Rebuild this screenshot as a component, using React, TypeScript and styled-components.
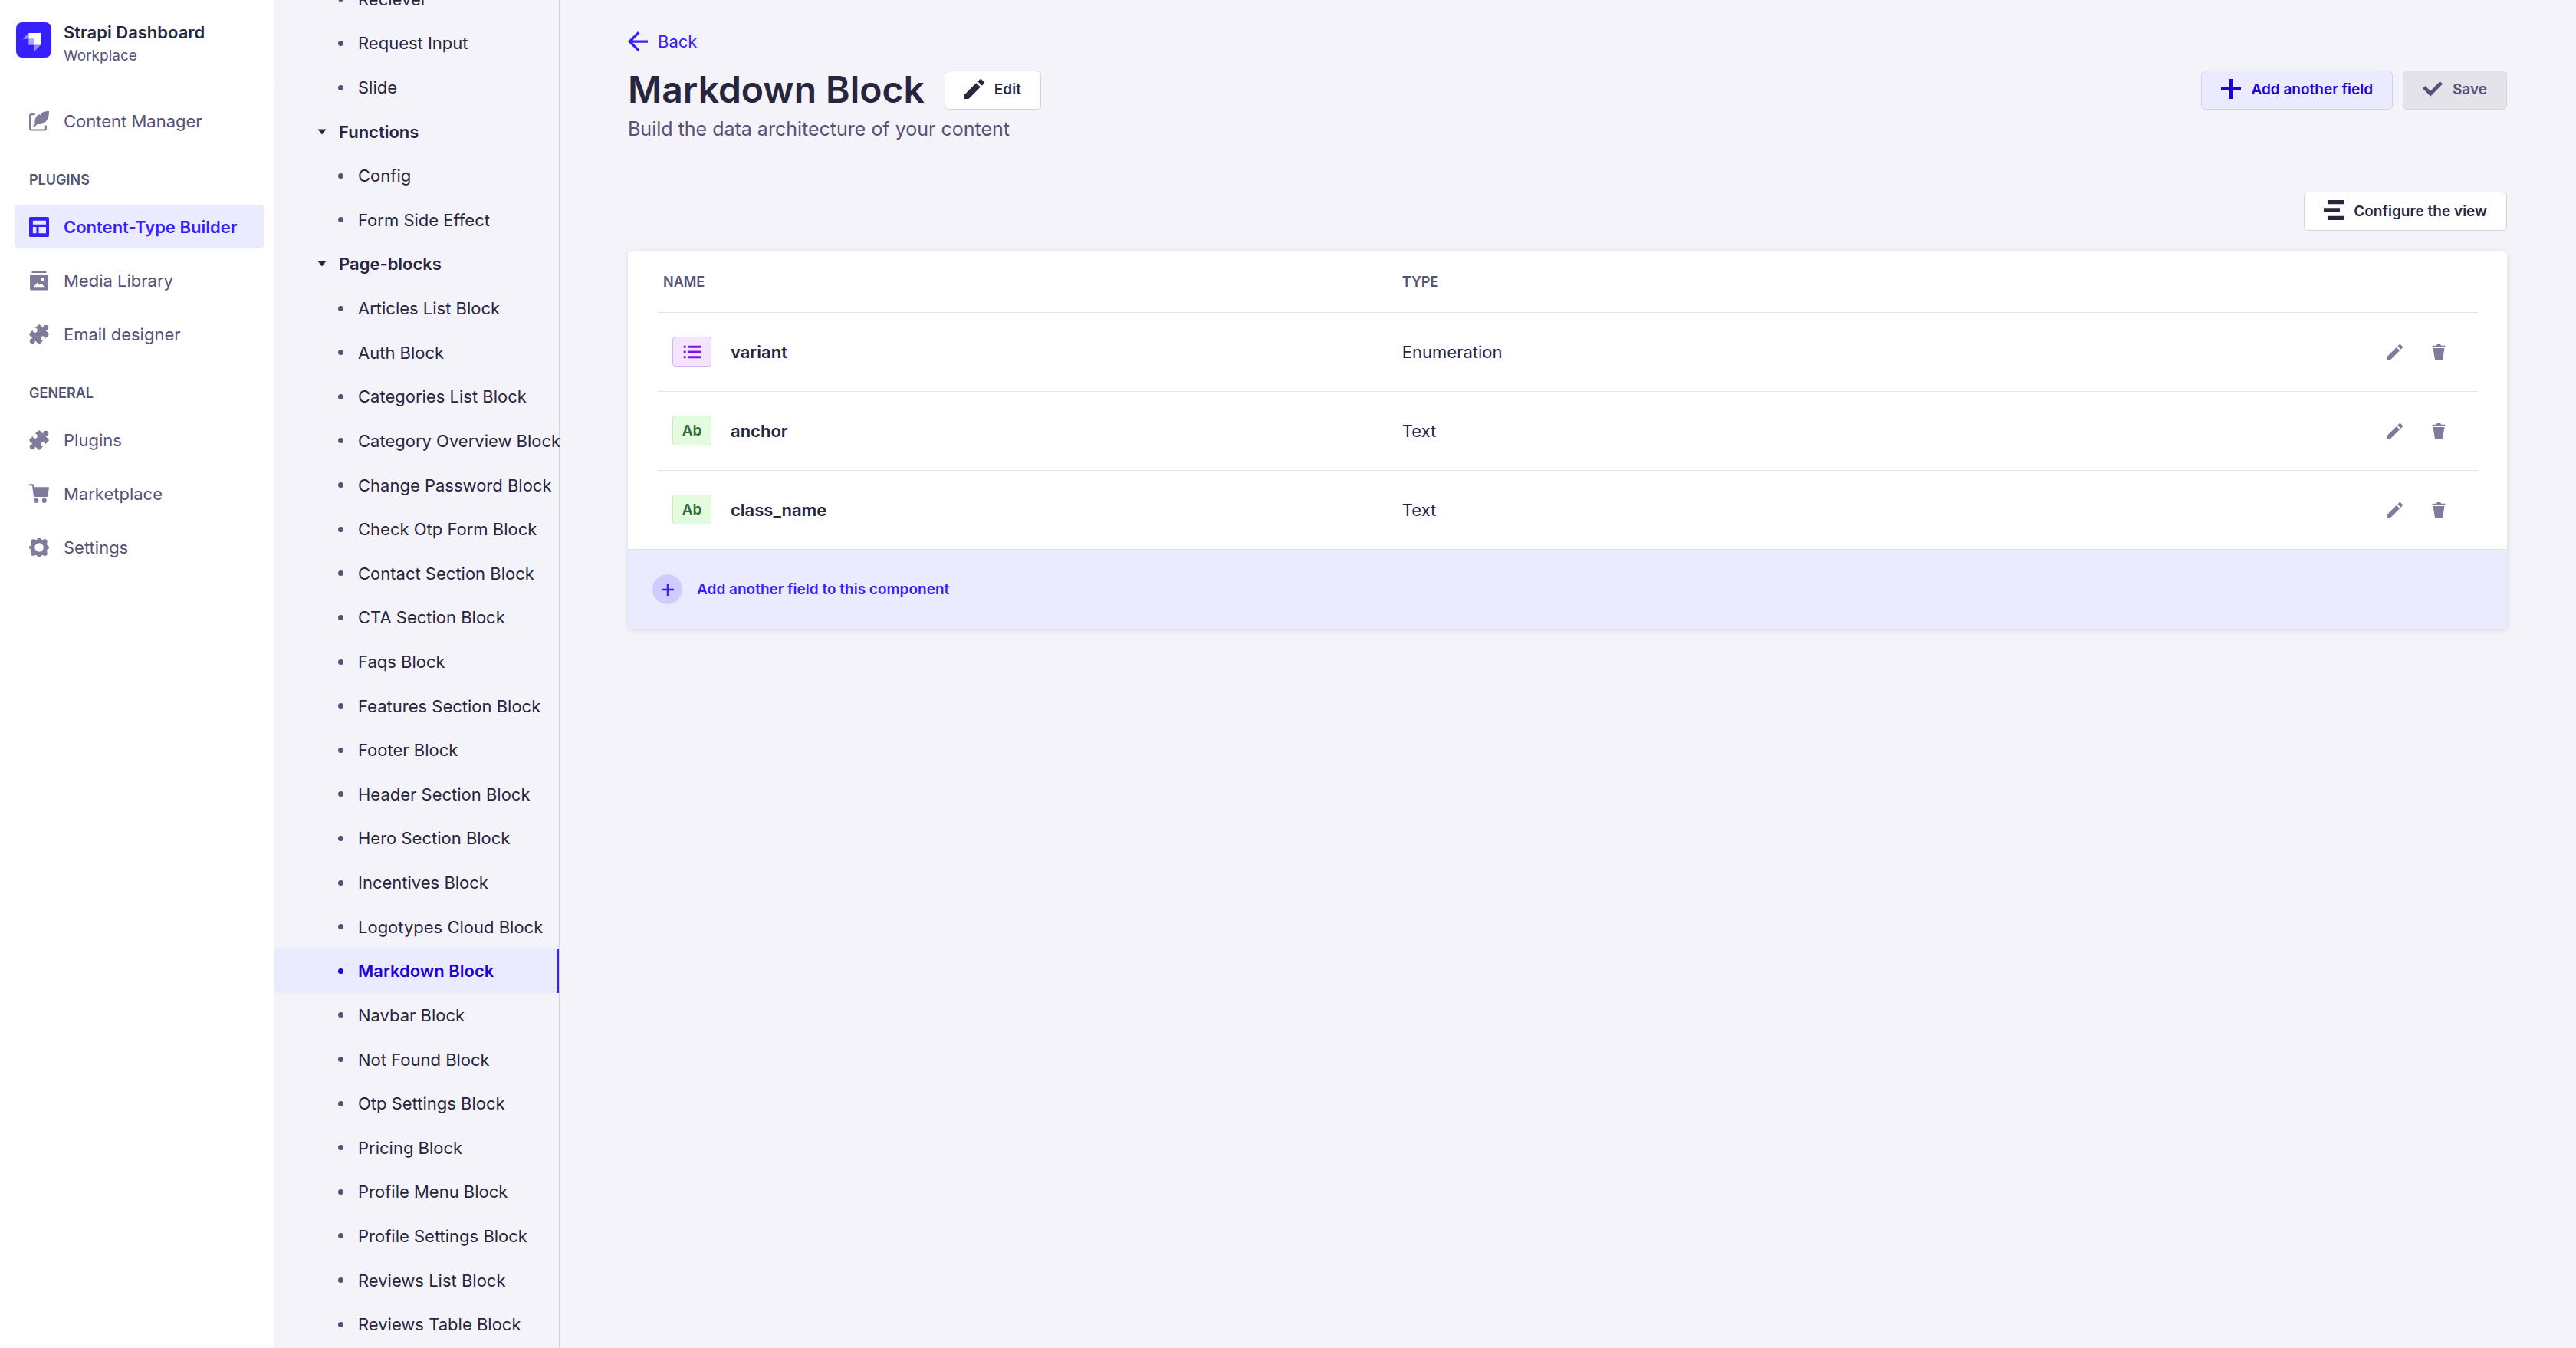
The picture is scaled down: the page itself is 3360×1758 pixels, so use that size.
import React from "react";
import styled, { createGlobalStyle, css } from "styled-components";

const color = {
  primary: "#3720ff",
  primaryDark: "#1f00dc",
  primarySoft: "#eaebff",
  primaryLine: "#d0ccff",
  text: "#28253e",
  textSoft: "#555276",
  icon: "#7e7b9b",
  canvas: "#f4f3f9",
  line: "#e3e3ea",
  lineStrong: "#d3d3df",
};

const GlobalStyle = createGlobalStyle`
  *, *::before, *::after { box-sizing: border-box; }
  body {
    margin: 0;
    background: ${color.canvas};
    color: ${color.text};
    font-family: Inter, "Liberation Sans", sans-serif;
    font-size: 22px;
    line-height: 32px;
  }
  ul { margin: 0; padding: 0; list-style: none; }
  a { color: inherit; text-decoration: none; }
  button { font: inherit; cursor: pointer; }
`;

/* ---------- Icons ---------- */

const Svg = styled.svg<{ $size: number }>`
  display: block;
  flex: none;
  width: ${(p) => p.$size}px;
  height: ${(p) => p.$size}px;
  fill: currentColor;
`;

type IconProps = { size?: number };

const ArrowLeftIcon = ({ size = 26 }: IconProps) => (
  <Svg $size={size} viewBox="0 0 24 24" aria-hidden="true">
    <path d="M24 13.3a.2.2 0 01-.2.2H5.74l8.239 8.239a.2.2 0 010 .282L12.14 23.86a.2.2 0 01-.282 0L.14 12.14a.2.2 0 010-.282L11.86.14a.2.2 0 01.282 0L13.98 1.98a.2.2 0 010 .282L5.74 10.5H23.8c.11 0 .2.09.2.2v2.6z" />
  </Svg>
);

const PencilIcon = ({ size = 26 }: IconProps) => (
  <Svg $size={size} viewBox="0 0 24 24" aria-hidden="true">
    <path d="M23.604 3.514c.528.528.528 1.36 0 1.887l-2.622 2.607-4.99-4.99L18.6.396a1.322 1.322 0 011.887 0l3.118 3.118zM0 24v-4.99l14.2-14.2 4.99 4.99L4.99 24H0z" />
  </Svg>
);

const TrashIcon = ({ size = 20 }: IconProps) => (
  <Svg $size={size} viewBox="0 0 24 24" aria-hidden="true">
    <path d="M3.236 6.149a.2.2 0 00-.197.233L6 24h12l2.96-17.618a.2.2 0 00-.196-.233H3.236zM21.8 1.983c.11 0 .2.09.2.2v1.584a.2.2 0 01-.2.2H2.2a.2.2 0 01-.2-.2V2.183c0-.11.09-.2.2-.2h5.511c.9 0 1.631-1.09 1.631-1.983h5.316c0 .894.73 1.983 1.631 1.983H21.8z" />
  </Svg>
);

const PlusIcon = ({ size = 26 }: IconProps) => (
  <Svg $size={size} viewBox="0 0 24 24" aria-hidden="true">
    <path d="M24 13.604a.3.3 0 01-.3.3h-9.795V23.7a.3.3 0 01-.3.3h-3.21a.3.3 0 01-.3-.3v-9.795H.3a.3.3 0 01-.3-.3v-3.21a.3.3 0 01.3-.3h9.795V.3a.3.3 0 01.3-.3h3.21a.3.3 0 01.3.3v9.795H23.7a.3.3 0 01.3.3v3.21z" />
  </Svg>
);

const CheckIcon = ({ size = 26 }: IconProps) => (
  <Svg $size={size} viewBox="0 0 24 24" aria-hidden="true">
    <path d="M20.727 2.97a.2.2 0 01.286 0l2.85 2.89a.2.2 0 010 .28L9.554 20.854a.2.2 0 01-.285 0l-9.13-9.243a.2.2 0 010-.281l2.85-2.892a.2.2 0 01.284 0l6.14 6.209L20.726 2.97z" />
  </Svg>
);

const LayerIcon = ({ size = 26 }: IconProps) => (
  <Svg $size={size} viewBox="0 0 24 24" aria-hidden="true">
    <path d="M4.6 0H24v4.8H4.6zM0 9.4h19.4v4.8H0zM4.6 19.2H24V24H4.6z" />
  </Svg>
);

const FeatherIcon = ({ size = 26 }: IconProps) => (
  <Svg $size={size} viewBox="0 0 24 24" aria-hidden="true">
    <path
      d="M7 3.8H2.4a1.4 1.4 0 00-1.4 1.4v16a1.4 1.4 0 001.4 1.4h16.4a1.4 1.4 0 001.4-1.4V17"
      fill="none"
      stroke="currentColor"
      strokeWidth="1.9"
    />
    <path d="M24 0c.3 4.600-1 9.600-4.300 12.900-2.300 2.300-5.400 2.900-8.700 2.900-1.400 0-2.300.8-3.100 1.700l-2.100 1.700c-.7.500-1.600-.3-1.100-1l2.300-2.700c-.5-3.400 0-7.200 2.300-9.800.9-1 2-1.700 3-1.700.4 0 .7.5 1 .9C14.500 1.500 18.600 0 24 0z" />
  </Svg>
);

const LayoutIcon = ({ size = 26 }: IconProps) => (
  <Svg $size={size} viewBox="0 0 24 24" aria-hidden="true">
    <path
      fillRule="evenodd"
      d="M1.500 0h21A1.500 1.500 0 0124 1.500v21a1.500 1.500 0 01-1.500 1.500h-21A1.500 1.500 0 010 22.500v-21A1.500 1.500 0 011.500 0zM4.500 4.300V9h15.800V4.300zM4.500 12v7.500h4.200V12zM11.600 12v7.500h8.700V12z"
    />
  </Svg>
);

const ImageIcon = ({ size = 26 }: IconProps) => (
  <Svg $size={size} viewBox="0 0 24 24" aria-hidden="true">
    <rect x="3.200" y="1" width="17.600" height="1.700" rx=".5" />
    <path
      fillRule="evenodd"
      d="M2.200 4.900h19.600a1.200 1.200 0 011.200 1.200v16.200a1.200 1.200 0 01-1.200 1.200H2.200A1.200 1.200 0 011 22.300V6.100a1.200 1.200 0 011.200-1.200zM16.400 8.500a2.200 2.200 0 100 4.400 2.200 2.200 0 000-4.400zM5.200 19.500h13.900l-4.400-4-2.200 1.700-2.300-3z"
    />
  </Svg>
);

const PuzzleIcon = ({ size = 26 }: IconProps) => (
  <Svg $size={size} viewBox="0 0 24 24" aria-hidden="true">
    <path
      transform="translate(12 12) rotate(45)"
      d="M-7-8.800H-2A3.300 3.300 0 112-8.800H7a1.800 1.800 0 011.800 1.800V-2A2.800 2.800 0 108.800 2V7a1.800 1.800 0 01-1.800 1.800H2A3.300 3.300 0 11-2 8.800H-7a1.800 1.800 0 01-1.800-1.800V2A2.800 2.800 0 10-8.800-2V-7a1.800 1.800 0 011.800-1.800z"
    />
  </Svg>
);

const CartIcon = ({ size = 26 }: IconProps) => (
  <Svg $size={size} viewBox="0 0 24 24" aria-hidden="true">
    <path d="M.6.300h3.700c.6 0 1 .3 1.100.9l.5 2.700h17.200c.6 0 1 .5.900 1l-1.700 9.600c-.1.700-.7 1.100-1.300 1.100H7.100c-.9 0-1.600-.6-1.700-1.400L3.700 2.100H.6C.2 2.100 0 1.800 0 1.500V.9C0 .5.300.300.6.300z" />
    <circle cx="8.600" cy="20.200" r="2.800" />
    <circle cx="18.200" cy="20.200" r="2.800" />
  </Svg>
);

const CogIcon = ({ size = 26 }: IconProps) => (
  <Svg $size={size} viewBox="-12 -12 24 24" aria-hidden="true">
    <path
      fillRule="evenodd"
      d="M0-12c1 0 1.700.6 2.100 1.500.4.900 1.200 1.400 2.100 1.100l3.300-.5c1.300-.1 2.500 1 2.400 2.400l-.5 3.300c-.3.900.2 1.700 1.100 2.100.9.400 1.500 1.100 1.500 2.100s-.6 1.700-1.500 2.100c-.9.400-1.400 1.200-1.100 2.100l.5 3.300c.1 1.300-1.100 2.500-2.400 2.400l-3.300-.5c-.9-.3-1.700.2-2.100 1.100C1.700 11.400 1 12 0 12s-1.700-.6-2.100-1.500c-.4-.9-1.200-1.400-2.100-1.100l-3.300.5c-1.300.1-2.500-1.100-2.400-2.400l.5-3.300c.3-.9-.2-1.700-1.100-2.100C-11.400 1.700-12 1-12 0s.6-1.700 1.500-2.100c.9-.4 1.400-1.200 1.100-2.100l-.5-3.300c-.1-1.400 1.100-2.500 2.400-2.400l3.300.5c.9.300 1.700-.2 2.100-1.100C-1.700-11.400-1-12 0-12zM0-5.300a5.300 5.300 0 100 10.600 5.300 5.300 0 000-10.600z"
    />
  </Svg>
);

const ListIcon = ({ size = 24 }: IconProps) => (
  <Svg $size={size} viewBox="0 0 24 24" aria-hidden="true">
    <circle cx="2.200" cy="5.200" r="1.700" />
    <circle cx="2.200" cy="12" r="1.700" />
    <circle cx="2.200" cy="18.800" r="1.700" />
    <rect x="6.200" y="3.700" width="17" height="3" rx="1" />
    <rect x="6.200" y="10.500" width="17" height="3" rx="1" />
    <rect x="6.200" y="17.300" width="17" height="3" rx="1" />
  </Svg>
);

const CaretIcon = ({ size = 12 }: IconProps) => (
  <Svg $size={size} viewBox="0 0 12 12" aria-hidden="true">
    <path d="M.5 2.500h11L6 9.500z" />
  </Svg>
);

const StrapiLogo = ({ size = 46 }: IconProps) => (
  <Svg $size={size} viewBox="0 0 138 138" aria-hidden="true">
    <rect width="138" height="138" rx="24" fill={color.primary} />
    <path d="M49 42h47v47H72V65H49z" fill="#fff" />
    <path d="M49 65h23v24H49z" fill="#aca4ff" />
    <path d="M49 42v23H25zM72 89h24L72 113z" fill="#9488ff" />
  </Svg>
);

/* ---------- Shell ---------- */

const Shell = styled.div`
  display: flex;
  height: 100vh;
  overflow: hidden;
`;

const MainNav = styled.nav`
  flex: none;
  width: 358px;
  background: #fff;
  border-right: 1px solid ${color.line};
`;

const Brand = styled.div`
  display: flex;
  align-items: center;
  gap: 16px;
  height: 110px;
  padding: 0 21px 6px;
  border-bottom: 1px solid ${color.line};
`;

const BrandText = styled.div`
  display: flex;
  flex-direction: column;
  padding-top: 12px;
`;

const BrandName = styled.span`
  font-weight: 600;
  line-height: 30px;
`;

const BrandPlace = styled.span`
  color: ${color.textSoft};
  font-size: 19px;
  line-height: 32px;
`;

const NavBody = styled.div`
  padding: 19px 12px 0 19px;
`;

const NavHeading = styled.h2`
  margin: 0;
  padding: 39px 19px 22px;
  color: ${color.textSoft};
  font-size: 18px;
  font-weight: 600;
  line-height: 20px;
  text-transform: uppercase;
`;

const NavList = styled.ul`
  display: flex;
  flex-direction: column;
  gap: 13px;
`;

const NavLink = styled.a<{ $active?: boolean }>`
  display: flex;
  align-items: center;
  gap: 19px;
  height: 57px;
  padding: 0 19px;
  border-radius: 6px;
  color: ${(p) => (p.$active ? color.primary : color.textSoft)};
  background: ${(p) => (p.$active ? color.primarySoft : "transparent")};
  font-weight: ${(p) => (p.$active ? 600 : 400)};
  white-space: nowrap;

  svg {
    color: ${(p) => (p.$active ? color.primary : color.icon)};
  }
`;

/* ---------- Component list ---------- */

const SubNav = styled.nav`
  display: flex;
  flex: none;
  flex-direction: column;
  width: 372px;
  border-right: 1px solid ${color.lineStrong};
`;

/* The list is shown scrolled, with its first row partly above the panel. */
const SubNavScroller = styled.div`
  display: flex;
  flex: 1;
  flex-direction: column;
  margin-top: -30px;
  padding-bottom: 2px;
`;

const Group = styled.section<{ $rows: number }>`
  display: flex;
  flex-direction: column;
  flex: ${(p) => p.$rows} 0 0;
`;

const GroupList = styled.ul<{ $rows: number }>`
  display: grid;
  grid-template-columns: minmax(0, 1fr);
  grid-auto-rows: 1fr;
  flex: ${(p) => p.$rows} 0 0;
`;

const GroupToggle = styled.button`
  display: flex;
  flex: 1 0 0;
  align-items: center;
  gap: 16px;
  padding: 0 0 0 56px;
  border: 0;
  background: none;
  color: ${color.text};
  font-weight: 600;
`;

const SubLink = styled.a<{ $active?: boolean }>`
  display: flex;
  align-items: center;
  gap: 19px;
  height: 100%;
  padding-left: 83px;
  white-space: nowrap;

  &::before {
    content: "";
    flex: none;
    width: 7px;
    height: 7px;
    border-radius: 50%;
    background: ${color.textSoft};
  }

  ${(p) =>
    p.$active &&
    css`
      color: ${color.primaryDark};
      background: ${color.primarySoft};
      border-right: 3px solid ${color.primary};
      font-weight: 600;

      &::before {
        background: ${color.primaryDark};
      }
    `}
`;

/* ---------- Content ---------- */

const Content = styled.main`
  flex: 1;
  min-width: 0;
  padding: 38px 90px 0 89px;
`;

const BackLink = styled.a`
  display: inline-flex;
  align-items: center;
  gap: 13px;
  color: ${color.primary};
`;

const TitleRow = styled.div`
  display: flex;
  align-items: center;
  justify-content: space-between;
  margin-top: 10px;
`;

const Cluster = styled.div<{ $gap: number }>`
  display: flex;
  align-items: center;
  gap: ${(p) => p.$gap}px;
`;

const Title = styled.h1`
  margin: 0;
  font-size: 48px;
  font-weight: 600;
  line-height: 64px;
`;

const Subtitle = styled.p`
  margin: 0;
  color: ${color.textSoft};
  font-size: 25px;
  line-height: 38px;
`;

const buttonTones = {
  plain: css`
    color: ${color.text};
    background: #fff;
    border-color: ${color.lineStrong};
  `,
  primary: css`
    color: ${color.primaryDark};
    background: ${color.primarySoft};
    border-color: ${color.primaryLine};
  `,
  disabled: css`
    color: ${color.textSoft};
    background: #e4e3ea;
    border-color: ${color.lineStrong};
  `,
};

const Button = styled.button<{ $tone: keyof typeof buttonTones }>`
  display: inline-flex;
  align-items: center;
  gap: 13px;
  height: 51px;
  padding: 0 25px;
  border: 1px solid;
  border-radius: 6px;
  font-size: 19px;
  font-weight: 600;
  line-height: 24px;
  white-space: nowrap;
  ${(p) => buttonTones[p.$tone]}

  svg {
    margin-bottom: 3px;
  }
`;

const Toolbar = styled.div`
  display: flex;
  justify-content: flex-end;
  margin: 63px 0 26px;
`;

const Card = styled.section`
  overflow: hidden;
  border-radius: 6px;
  background: #fff;
  box-shadow: 0 2px 7px rgba(33, 33, 52, 0.12);
`;

const TableArea = styled.div`
  padding: 0 38px 0 39px;
`;

const FieldTable = styled.table`
  width: 100%;
  border-collapse: collapse;
  table-layout: fixed;
`;

const HeadCell = styled.th<{ $width?: string }>`
  width: ${(p) => p.$width ?? "auto"};
  height: 80px;
  padding: 2px 7px 0;
  border-bottom: 1px solid ${color.line};
  color: ${color.textSoft};
  font-size: 18px;
  font-weight: 600;
  line-height: 24px;
  text-align: left;
  text-transform: uppercase;
`;

const Row = styled.tr`
  &:not(:last-child) td {
    border-bottom: 1px solid ${color.line};
  }
`;

const Cell = styled.td`
  height: 103px;
  padding: 0 7px;
`;

const FieldName = styled.div`
  display: flex;
  align-items: center;
  gap: 25px;
  padding-left: 12px;
  font-weight: 600;
`;

const TypeBadge = styled.span<{ $kind: FieldKind }>`
  display: inline-flex;
  align-items: center;
  justify-content: center;
  width: 51px;
  height: 39px;
  border: 1px solid;
  border-radius: 4px;
  font-size: 19px;
  line-height: 24px;
  ${(p) =>
    p.$kind === "Enumeration"
      ? css`
          color: #8312e0;
          background: #f3e5fc;
          border-color: #d9b0f2;
        `
      : css`
          color: #2b6f38;
          background: #e5fbe0;
          border-color: #bdeeb6;
        `}
`;

const RowActions = styled.div`
  display: flex;
  justify-content: flex-end;
  gap: 6px;
  padding-right: 19px;
`;

const IconButton = styled.button`
  display: flex;
  align-items: center;
  justify-content: center;
  width: 51px;
  height: 51px;
  padding: 0;
  border: 0;
  background: none;
  color: ${color.icon};
`;

const AddFieldButton = styled.button`
  display: flex;
  align-items: center;
  gap: 19px;
  width: 100%;
  height: 104px;
  padding: 0 32px;
  border: 0;
  border-top: 1px solid ${color.line};
  background: ${color.primarySoft};
  color: ${color.primary};
  font-size: 19px;
  font-weight: 600;
  line-height: 24px;
`;

const PlusDisc = styled.span`
  display: flex;
  align-items: center;
  justify-content: center;
  width: 39px;
  height: 39px;
  border-radius: 50%;
  background: ${color.primaryLine};
`;

/* ---------- Data ---------- */

type FieldKind = "Enumeration" | "Text";

const fields: { name: string; kind: FieldKind }[] = [
  { name: "variant", kind: "Enumeration" },
  { name: "anchor", kind: "Text" },
  { name: "class_name", kind: "Text" },
];

const pluginLinks = [
  { label: "Content-Type Builder", icon: <LayoutIcon />, active: true },
  { label: "Media Library", icon: <ImageIcon /> },
  { label: "Email designer", icon: <PuzzleIcon /> },
];

const generalLinks = [
  { label: "Plugins", icon: <PuzzleIcon /> },
  { label: "Marketplace", icon: <CartIcon /> },
  { label: "Settings", icon: <CogIcon /> },
];

const groups: { title?: string; items: string[] }[] = [
  { items: ["Reciever", "Request Input", "Slide"] },
  { title: "Functions", items: ["Config", "Form Side Effect"] },
  {
    title: "Page-blocks",
    items: [
      "Articles List Block",
      "Auth Block",
      "Categories List Block",
      "Category Overview Block",
      "Change Password Block",
      "Check Otp Form Block",
      "Contact Section Block",
      "CTA Section Block",
      "Faqs Block",
      "Features Section Block",
      "Footer Block",
      "Header Section Block",
      "Hero Section Block",
      "Incentives Block",
      "Logotypes Cloud Block",
      "Markdown Block",
      "Navbar Block",
      "Not Found Block",
      "Otp Settings Block",
      "Pricing Block",
      "Profile Menu Block",
      "Profile Settings Block",
      "Reviews List Block",
      "Reviews Table Block",
    ],
  },
];

const current = "Markdown Block";

type NavEntry = { label: string; icon: React.ReactNode; active?: boolean };

const NavLinks = ({ links }: { links: NavEntry[] }) => (
  <NavList>
    {links.map((link) => (
      <li key={link.label}>
        <NavLink href="#" $active={link.active}>
          {link.icon}
          {link.label}
        </NavLink>
      </li>
    ))}
  </NavList>
);

export default function App() {
  return (
    <>
      <GlobalStyle />
      <Shell>
        <MainNav>
          <Brand>
            <StrapiLogo />
            <BrandText>
              <BrandName>Strapi Dashboard</BrandName>
              <BrandPlace>Workplace</BrandPlace>
            </BrandText>
          </Brand>
          <NavBody>
            <NavLinks links={[{ label: "Content Manager", icon: <FeatherIcon /> }]} />
            <NavHeading>Plugins</NavHeading>
            <NavLinks links={pluginLinks} />
            <NavHeading>General</NavHeading>
            <NavLinks links={generalLinks} />
          </NavBody>
        </MainNav>

        <SubNav>
          <SubNavScroller>
            {groups.map((group) => (
              <Group
                key={group.title ?? "top"}
                $rows={group.items.length + (group.title ? 1 : 0)}
              >
                {group.title && (
                  <GroupToggle type="button" aria-expanded="true">
                    <CaretIcon />
                    {group.title}
                  </GroupToggle>
                )}
                <GroupList $rows={group.items.length}>
                  {group.items.map((item) => (
                    <li key={item}>
                      <SubLink href="#" $active={item === current}>
                        {item}
                      </SubLink>
                    </li>
                  ))}
                </GroupList>
              </Group>
            ))}
          </SubNavScroller>
        </SubNav>

        <Content>
          <BackLink href="#">
            <ArrowLeftIcon />
            Back
          </BackLink>
          <TitleRow>
            <Cluster $gap={26}>
              <Title>Markdown Block</Title>
              <Button type="button" $tone="plain">
                <PencilIcon />
                Edit
              </Button>
            </Cluster>
            <Cluster $gap={13}>
              <Button type="button" $tone="primary">
                <PlusIcon />
                Add another field
              </Button>
              <Button type="button" $tone="disabled" disabled>
                <CheckIcon />
                Save
              </Button>
            </Cluster>
          </TitleRow>
          <Subtitle>Build the data architecture of your content</Subtitle>

          <Toolbar>
            <Button type="button" $tone="plain">
              <LayerIcon />
              Configure the view
            </Button>
          </Toolbar>

          <Card>
            <TableArea>
              <FieldTable>
                <thead>
                  <tr>
                    <HeadCell $width="40.6%">Name</HeadCell>
                    <HeadCell>Type</HeadCell>
                    <HeadCell aria-label="Actions" />
                  </tr>
                </thead>
                <tbody>
                  {fields.map((field) => (
                    <Row key={field.name}>
                      <Cell>
                        <FieldName>
                          <TypeBadge $kind={field.kind}>
                            {field.kind === "Enumeration" ? <ListIcon /> : "Ab"}
                          </TypeBadge>
                          {field.name}
                        </FieldName>
                      </Cell>
                      <Cell>{field.kind}</Cell>
                      <Cell>
                        <RowActions>
                          <IconButton type="button" aria-label={`Edit ${field.name}`}>
                            <PencilIcon size={20} />
                          </IconButton>
                          <IconButton type="button" aria-label={`Delete ${field.name}`}>
                            <TrashIcon />
                          </IconButton>
                        </RowActions>
                      </Cell>
                    </Row>
                  ))}
                </tbody>
              </FieldTable>
            </TableArea>
            <AddFieldButton type="button">
              <PlusDisc>
                <PlusIcon size={16} />
              </PlusDisc>
              Add another field to this component
            </AddFieldButton>
          </Card>
        </Content>
      </Shell>
    </>
  );
}
